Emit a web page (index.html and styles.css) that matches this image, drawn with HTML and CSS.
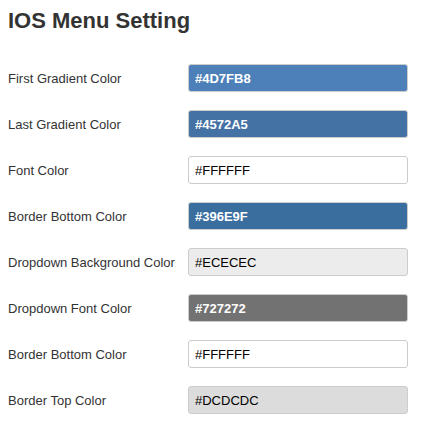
FILE: index.html
```html
<!DOCTYPE html>
<html>
<head>
<meta charset="utf-8">
<link rel="stylesheet" href="styles.css">
</head>
<body>
<h1 class="title">IOS Menu Setting</h1>
<div class="form">
  <div class="row"><label class="label">First Gradient Color</label><input class="field dark" style="background:#4D7FB8" value="#4D7FB8"></div>
  <div class="row"><label class="label">Last Gradient Color</label><input class="field dark" style="background:#4572A5" value="#4572A5"></div>
  <div class="row"><label class="label">Font Color</label><input class="field light" style="background:#FFFFFF" value="#FFFFFF"></div>
  <div class="row"><label class="label">Border Bottom Color</label><input class="field dark" style="background:#396E9F" value="#396E9F"></div>
  <div class="row"><label class="label">Dropdown Background Color</label><input class="field light" style="background:#ECECEC" value="#ECECEC"></div>
  <div class="row"><label class="label">Dropdown Font Color</label><input class="field dark" style="background:#727272" value="#727272"></div>
  <div class="row"><label class="label">Border Bottom Color</label><input class="field light" style="background:#FFFFFF" value="#FFFFFF"></div>
  <div class="row"><label class="label">Border Top Color</label><input class="field light" style="background:#DCDCDC" value="#DCDCDC"></div>
</div>
</body>
</html>
```
FILE: styles.css
```css
body {
  margin: 8px;
  font-family: "Liberation Sans", Arial, sans-serif;
  font-size: 13px;
  color: #333;
  background: #fff;
}
.title {
  margin: 1px 0 0 0;
  font-size: 22px;
  line-height: 24px;
  font-weight: bold;
  color: #333;
  height: 55px;
}
.form {
  display: flex;
  flex-direction: column;
  gap: 18px;
}
.row {
  display: grid;
  grid-template-columns: 180px 220px;
  align-items: center;
}
.label {
  font-size: 13px;
  color: #333;
}
.field {
  box-sizing: border-box;
  width: 220px;
  height: 28px;
  margin: 0;
  padding: 0 6px;
  border: 1px solid #ccc;
  border-radius: 3px;
  font-family: "Liberation Sans", Arial, sans-serif;
  font-size: 13px;
  outline: none;
}
.field.dark {
  color: #fff;
  font-weight: bold;
}
.field.light {
  color: #000;
}
```
